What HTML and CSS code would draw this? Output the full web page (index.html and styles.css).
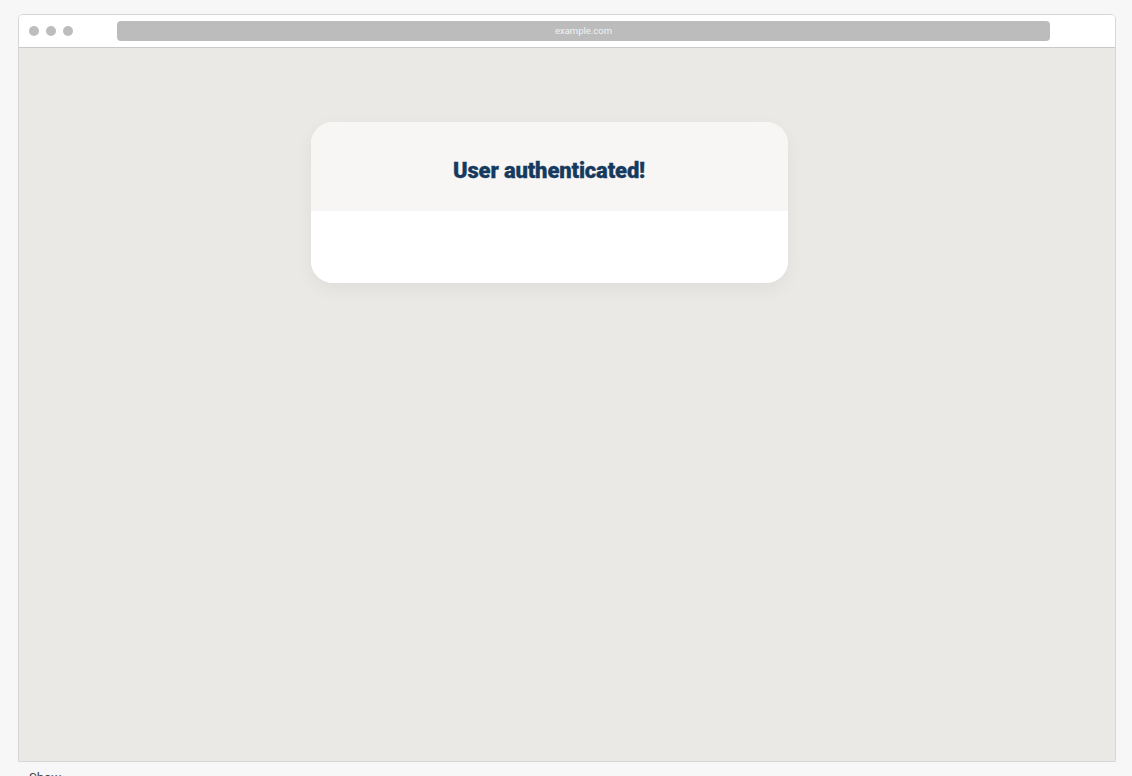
FILE: index.html
```
<!DOCTYPE html>
<html lang="en">
<head>
<meta charset="utf-8">
<title>User authenticated</title>
<link rel="stylesheet" href="styles.css">
</head>
<body>
<div class="page">
  <div class="browser">
    <div class="toolbar">
      <div class="dots">
        <span class="dot"></span>
        <span class="dot"></span>
        <span class="dot"></span>
      </div>
      <div class="url">example.com</div>
    </div>
    <div class="viewport">
      <div class="card">
        <div class="card-head">
          <h1 class="title">User authenticated!</h1>
        </div>
        <div class="card-body"></div>
      </div>
    </div>
  </div>
  <div class="caption">Show</div>
</div>
</body>
</html>
```
FILE: styles.css
```
html, body {
  margin: 0;
  padding: 0;
}
body {
  background: #f6f7f6;
  font-family: Roboto, "Liberation Sans", Arial, sans-serif;
  width: 1132px;
  height: 776px;
  overflow: hidden;
}
.page {
  padding: 14px 16px 0 18px;
}
.browser {
  width: 1096px;
  border: 1px solid #d6d6d4;
  border-radius: 5px 5px 0 0;
  background: #ffffff;
  overflow: hidden;
}
.toolbar {
  height: 32px;
  display: flex;
  align-items: center;
  border-bottom: 1px solid #c9c9c7;
  background: #ffffff;
}
.dots {
  display: flex;
  gap: 7px;
  padding-left: 10px;
  width: 88px;
  box-sizing: border-box;
}
.dot {
  width: 10px;
  height: 10px;
  border-radius: 50%;
  background: #bcbdbc;
}
.url {
  width: 933px;
  height: 20px;
  border-radius: 4px;
  background: #bbbcbb;
  color: #f2f2f2;
  font-size: 9.5px;
  line-height: 20px;
  text-align: center;
  margin-left: 10px;
}
.viewport {
  height: 713px;
  background: #eae9e5;
  display: flex;
  justify-content: center;
  align-items: flex-start;
  padding-top: 74px;
  padding-right: 36px;
  box-sizing: border-box;
}
.card {
  width: 477px;
  border-radius: 22px;
  overflow: hidden;
  background: #ffffff;
  box-shadow: 0 6px 18px rgba(0, 0, 0, 0.05);
}
.card-head {
  height: 89px;
  background: #f7f6f4;
  display: flex;
  align-items: center;
  justify-content: center;
}
.title {
  margin: 0;
  font-size: 22px;
  font-weight: 900;
  color: #163a5e;
  letter-spacing: -0.15px;
  padding-top: 8px;
  -webkit-text-stroke: 0.3px #163a5e;
}
.card-body {
  height: 72px;
  background: #ffffff;
}
.caption {
  margin: 8px 0 0 11px;
  font-size: 13px;
  color: #444;
}
```
